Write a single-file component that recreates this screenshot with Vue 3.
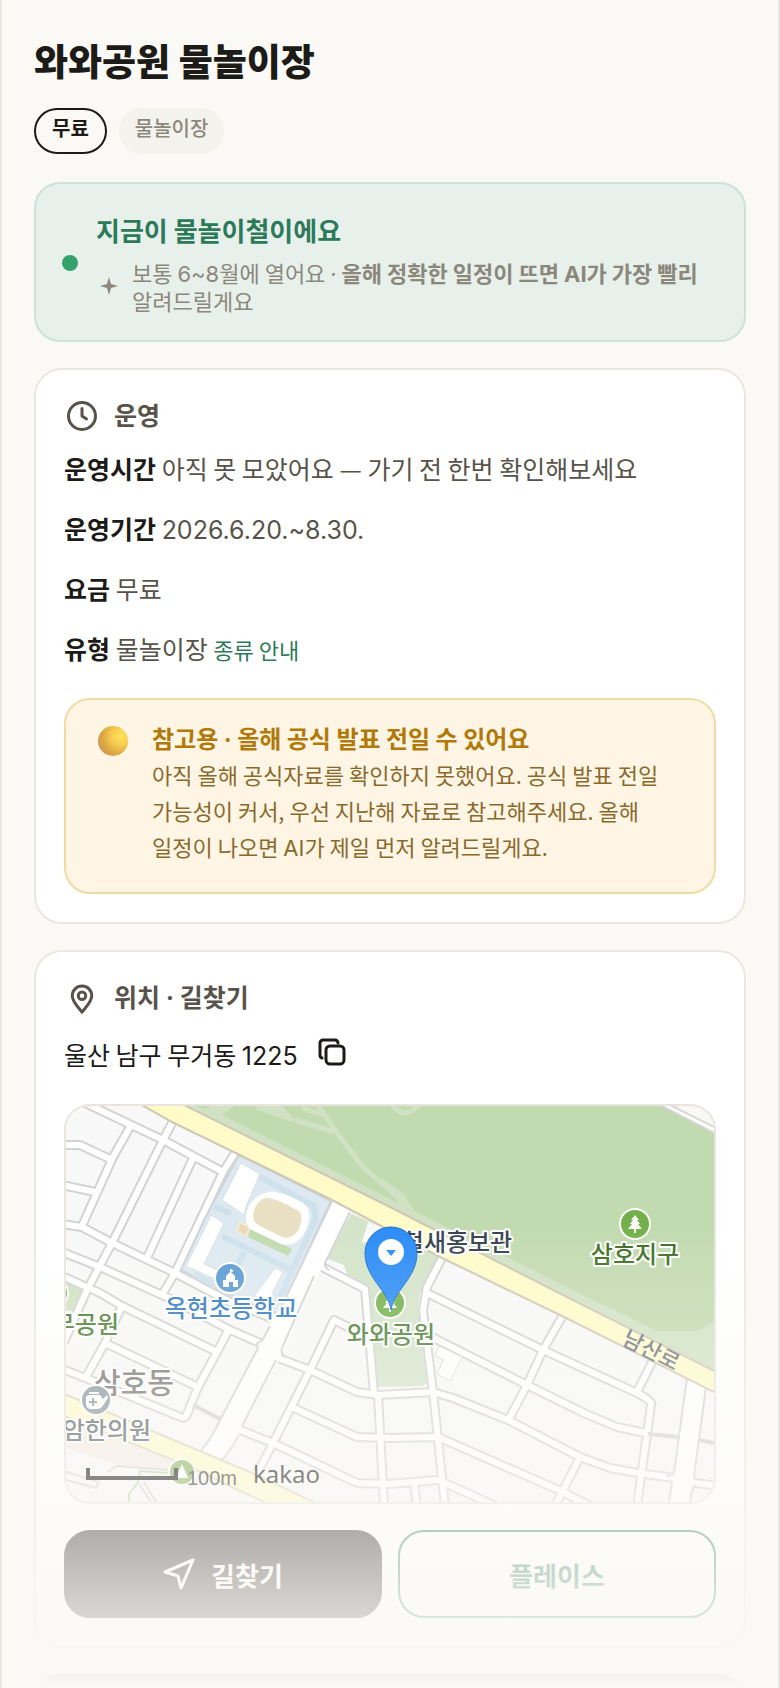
<script setup>
const facts = [
  { label: '운영시간', value: '아직 못 모았어요 — 가기 전 한번 확인해보세요' },
  { label: '운영기간', value: '2026.6.20.~8.30.', latin: true },
  { label: '요금', value: '무료' },
  { label: '유형', value: '물놀이장', link: '종류 안내' },
]

// centre lines of the small streets, in map units
const streets = [
  // north-west blocks
  'M19 -3L97 34L157 66',
  'M-4 39H14L44 53',
  'M64 21L47 51L16 120',
  'M-4 79L29 86',
  'M106 17L97 34L46 137L21 184L-2 236',
  'M127 52L81 152',
  'M169 47L157 66L109 167L97 187',
  'M-4 118L16 121L46 137L109 167L164 196L205 212',
  'M-4 146L34 161L107 194L164 224L194 237',
  'M-4 170L34 187L56 200L151 246',
  // south-west blocks
  'M56 200L39 237L20 271',
  'M39 237L132 281',
  'M162 225L151 246L132 281L121 308Q119 314 112 310L27 275L-4 263',
  // centre
  'M256 161L299 183L308 288',
  'M284 222L268 214L244 264L207 337L192 366',
  'M212 252L244 264L291 286L312 289L367 286L387 292L442 314L514 351L544 362L572 367L608 372',
  'M228 302L291 331L324 332L372 331L497 386L524 400',
  'M174 324L207 337L291 377L324 378L372 374L430 400',
  'M312 289L318 400',
  // south-east blocks
  'M377 150L361 181L357 204L367 286L379 400',
  'M361 187L477 244L571 287Q587 295 585 299L571 400',
  'M366 231L461 279L520 308L551 321L580 327',
  'M496 211L477 244L461 279L443 313',
  'M586 256L571 286',
  'M514 351L489 400',
  'M348 376L351 400',
  'M624 376L652 380',
]
</script>

<template>
  <main class="page">
    <header class="head">
      <h1 class="head__title">와와공원 물놀이장</h1>
      <div class="head__chips">
        <span class="chip chip--outline">무료</span>
        <span class="chip">물놀이장</span>
      </div>
    </header>

    <section class="season">
      <span class="season__dot"></span>
      <div class="season__body">
        <h2 class="season__title">지금이 물놀이철이에요</h2>
        <div class="season__note">
          <svg class="season__spark" viewBox="0 0 16 16" aria-hidden="true">
            <path d="M8 0L9.800 6.200L16 8L9.800 9.800L8 16L6.200 9.800L0 8L6.200 6.200Z" />
          </svg>
          <p>
            보통 <span class="latin">6~8</span>월에 열어요 <span class="latin">·</span> <b>올해 정확한 일정이 뜨면
            <span class="latin">AI</span>가 가장 빨리</b> 알려드릴게요
          </p>
        </div>
      </div>
    </section>

    <section class="card">
      <h2 class="card__title">
        <svg class="icon" viewBox="0 0 24 24" aria-hidden="true">
          <circle cx="12" cy="12" r="9" />
          <path d="M12 7v5l3 2" />
        </svg>
        운영
      </h2>
      <dl class="facts">
        <div v-for="fact in facts" :key="fact.label" class="facts__row">
          <dt>{{ fact.label }}</dt>
          {{ ' ' }}
          <dd>
            <span :class="{ latin: fact.latin }">{{ fact.value }}</span>
            {{ ' ' }}
            <a v-if="fact.link" href="#types">{{ fact.link }}</a>
          </dd>
        </div>
      </dl>
      <aside class="notice">
        <svg class="notice__ball" viewBox="0 0 30 30" aria-hidden="true">
          <defs>
            <radialGradient id="ball" cx="0.75" cy="0.35" r="0.8">
              <stop offset="0" stop-color="#ffe35a" />
              <stop offset="0.35" stop-color="#f8cd4f" />
              <stop offset="0.75" stop-color="#dba742" />
              <stop offset="1" stop-color="#cf9458" />
            </radialGradient>
          </defs>
          <circle cx="15" cy="15" r="15" fill="url(#ball)" />
        </svg>
        <div>
          <h3 class="notice__title">참고용 <span class="latin">·</span> 올해 공식 발표 전일 수 있어요</h3>
          <p class="notice__text">
            아직 올해 공식자료를 확인하지 못했어요. 공식 발표 전일 가능성이 커서, 우선 지난해 자료로 참고해주세요. 올해 일정이 나오면
            <span class="latin">AI</span>가 제일 먼저 알려드릴게요.
          </p>
        </div>
      </aside>
    </section>

    <section class="card">
      <h2 class="card__title">
        <svg class="icon" viewBox="0 0 24 24" aria-hidden="true">
          <path d="M12 21.500C9.500 18 5.500 14.500 5.500 10.500a6.500 6.500 0 0 1 13 0C18.500 14.500 14.500 18 12 21.500Z" />
          <circle cx="12" cy="10.500" r="2.500" />
        </svg>
        <span>위치 <span class="latin">·</span> 길찾기</span>
      </h2>
      <div class="address">
        <span>울산 남구 무거동 <span class="latin">1225</span></span>
        <button class="address__copy" type="button" aria-label="주소 복사">
          <svg viewBox="0 0 28 28" aria-hidden="true">
            <rect x="8" y="8" width="18" height="18" rx="4" />
            <path d="M4 20A3 3 0 0 1 2 17V5a3 3 0 0 1 3-3h12a3 3 0 0 1 3 3" />
          </svg>
        </button>
      </div>

      <div class="map">
        <svg
          class="map__art"
          viewBox="0 0 648 396"
          preserveAspectRatio="xMidYMid slice"
          role="img"
          aria-label="와와공원 주변 지도"
        >
          <rect width="648" height="396" fill="#f8f8f8" />

          <!-- riverside park -->
          <path d="M118 0H648V270L487 188L320 104Z" fill="#d0e2c3" />
          <path d="M156 9L168 0H648V219L631 225H591L527 194L324 93Z" fill="#c2dab0" />
          <path d="M128 0H146L140 3Z" fill="#c2dab0" />
          <g fill="none" stroke="#d0e2c3" stroke-width="5">
            <path d="M251 -2L271 27L297 61L324 84L344 104M229 14L268 26M236 2L256 8M314 74L336 90L346 106" />
            <path d="M326 -2Q339 16 353 -2" />
            <path d="M648 219L632 228L630 243L648 254" />
          </g>
          <path d="M190 0H216L229 14L226 16L191 4Z" fill="#d0e2c3" />
          <path d="M594 -2H652V29L594 -1Z" fill="#fff" stroke="#d5d3d3" stroke-width="2" />
          <path d="M604 -1H652V23Z" fill="#f8f8f8" stroke="#d4d8cf" stroke-width="2" />

          <!-- neighbourhood park -->
          <path
            d="M284 107L262 153L278 159L281 167L277 171L300 183L311 281L357 280L364 275L352 204L354 187L376 148Z"
            fill="#d3e4c9"
          />
          <path d="M0 172L20 184L10 206L0 204Z" fill="#d0e2c3" />
          <path d="M302 116L320 122L314 140L296 136Z" fill="#f8f8f8" />

          <!-- blocks and streets -->
          <g fill="none" stroke="#d3d3d3" stroke-width="10" stroke-linejoin="round">
            <path v-for="d in streets" :key="d" :d="d" />
          </g>
          <g fill="none" stroke="#fff" stroke-width="6" stroke-linejoin="round">
            <path v-for="d in streets" :key="d" :d="d" />
          </g>

          <!-- school grounds -->
          <path d="M173 49L265 95L212 208L166 190L115 164L140 110Z" fill="#dde9f1" stroke="#ced4d8" stroke-width="2" />
          <g fill="none" stroke="#cfe1ed" stroke-width="6">
            <path d="M192 70L248 100L250 112L212 196M148 100L165 108M156 130L225 164M178 146L165 172M128 168L160 184" />
          </g>
          <g fill="#fff" stroke="#d8dee2" stroke-width="1">
            <path d="M175 57L194 68L181 98L178 109L156 94Z" />
            <path d="M145 109L158 117L138 158L168 172L164 180L120 160L138 124Z" />
            <path d="M209 162L217 166L202 196L188 190Z" />
          </g>
          <path d="M184 123L226 143L222 150L182 131Z" fill="#c2dab0" />
          <path d="M174 116L184 121L180 130L171 125Z" fill="#ead9b8" stroke="#f4ebd8" stroke-width="2" />
          <path d="M203 86Q214 84 237 97Q249 106 239 126Q230 142 215 138L186 124Q175 116 184 98Q191 88 203 86Z" fill="#fff" />
          <path d="M200 92Q208 91 231 104Q238 108 234 120Q230 132 218 132L192 119Q184 114 189 102Q193 93 200 92Z" fill="#e9dfc2" />

          <!-- wide streets -->
          <path d="M266 94L286 106L259 157L244 184L214 252L174 324L156 356L134 346L154 314L194 240L219 191Z" fill="#fff" />
          <g fill="none" stroke="#d3d3d3" stroke-width="2">
            <path d="M266 95L214 204M204 220L196 235Q188 237 192 242L154 314Q146 332 134 346" />
            <path d="M284 106L259 157Q258 161 263 164M248 170L216 242Q214 248 220 251M210 254L176 320M172 330Q168 340 156 354" />
          </g>
          <path d="M127 299L154 313" stroke="#d0d0d0" stroke-width="4" />
          <path d="M621 270L641 280L624 396H604Z" fill="#fff" />
          <path
            d="M621 272L608 367Q606 370 600 370M606 376L603 396M640 281L628 370Q628 373 634 374M630 380Q626 380 624 396"
            fill="none"
            stroke="#d3d3d3"
            stroke-width="2"
          />
          <path d="M582 328L612 331M633 334L648 337" stroke="#d0d0d0" stroke-width="4" />
          <path d="M373 240L396 251L384 275L371 268L377 254L369 250Z" fill="#fff" stroke="#d8d8d8" stroke-width="1" />

          <!-- main roads -->
          <path
            d="M74 -2L106 16L266 94L374 151L442 184L494 209L652 288V267L487 184L324 101L116 -2Z"
            fill="#fffbc9"
            stroke="#cfc7b4"
            stroke-width="2"
          />
          <path d="M-4 287L136 346L184 366L252 398H202L124 361L-4 309Z" fill="#fffbc9" stroke="#d9d4bd" stroke-width="2" />
          <path d="M0 312L124 362L112 368L50 358L0 342Z" fill="#f4ede3" />
          <path d="M63 398V388L72 376L74 365L114 368" fill="none" stroke="#b5d69c" stroke-width="2" />
          <path
            d="M42 366L50 360L104 364M73 378L86 398M78 376L90 396M0 366L33 376L30 382L0 374"
            fill="none"
            stroke="#d3d3d3"
            stroke-width="2"
          />

          <!-- map labels -->
          <g class="map__labels">
            <text x="165" y="211" fill="#2f78c0" text-anchor="middle">옥현초등학교</text>
            <text x="391" y="145" fill="#36414f" text-anchor="middle">철새홍보관</text>
            <text x="569" y="157" fill="#3d6f22" text-anchor="middle">삼호지구</text>
            <text x="325" y="237" fill="#467a30" text-anchor="middle">와와공원</text>
            <text x="53" y="227" fill="#467a30" text-anchor="end">무공원</text>
            <text class="map__district" x="108" y="288" fill="#707070" text-anchor="end">삼호동</text>
            <text x="85" y="333" fill="#4f5a61" text-anchor="end">암한의원</text>
            <text class="map__road" x="585" y="252" transform="rotate(27 585 245)" fill="#6a7184" text-anchor="middle">남산로</text>
          </g>

          <!-- place badges -->
          <g stroke="#fff" stroke-width="2">
            <circle cx="164" cy="172" r="15" fill="#5b9bd3" />
            <circle cx="569" cy="118" r="15" fill="#73b04a" />
            <circle cx="324" cy="197" r="15" fill="#73b04a" />
            <circle cx="30" cy="294" r="15" fill="#84939b" />
            <circle cx="116" cy="366" r="13" fill="#84ad54" />
            <circle cx="-12" cy="187" r="14" fill="#73b04a" />
          </g>
          <g fill="#fff">
            <path d="M157 181V174H160V170L164 166V163H165L168 165L165 166L169 170V174H172V181H167V176H163V181Z" />
            <path d="M569 109L573 114H571L574 118H572L576 123H570V127H568V123H562L566 118H564L567 114H565Z" />
            <path d="M324 188L328 193H326L329 197H327L331 202H325V206H323V202H317L321 197H319L322 193H320Z" />
            <path d="M116 358L122 372L110 372Z" />
            <path d="M20 292Q20 289 24 289H34L37 293L41 289L42 292L36 301Q34 303 31 303H25Q20 303 20 297ZM23 286H33V288H23Z" />
          </g>
          <path d="M27 292V300M23 296H31" stroke="#84939b" stroke-width="2" />

          <!-- pin -->
          <path
            d="M325 204C322 184 299 172 299 147A26 26 0 0 1 351 147C351 172 328 184 325 204Z"
            fill="#2b8cf7"
            stroke="#1b6ed0"
            stroke-width="1"
          />
          <circle cx="325" cy="146" r="13" fill="#fff" />
          <path d="M320 144H330L325 150Z" fill="#2b8cf7" />

          <!-- scale and provider -->
          <path d="M22 362V372H110V362" fill="none" stroke="#000" stroke-width="4" />
          <text class="map__scale" x="121" y="379">100m</text>
          <text class="map__brand" x="187" y="377">kakao</text>
        </svg>
      </div>

      <div class="actions">
        <button class="btn btn--dark" type="button">
          <svg class="btn__icon" viewBox="0 0 32 32" aria-hidden="true">
            <path d="M30 2L2 14L15 18L18 30Z" />
          </svg>
          길찾기
        </button>
        <button class="btn btn--line" type="button">플레이스</button>
      </div>
    </section>

    <section class="card card--next"></section>
    <div class="fade"></div>
  </main>
</template>

<style>
body {
  margin: 0;
  background: #faf9f5;
}
</style>

<style scoped>
.page {
  position: relative;
  box-sizing: border-box;
  height: 100vh;
  overflow: hidden;
  padding: 34px 32px 0;
  border: solid #e9e7e0;
  border-width: 0 2px;
  background: #faf9f5;
  color: #1c1b18;
  font-family: 'Noto Sans CJK KR', sans-serif;
  font-size: 25px;
  word-break: keep-all;
}

h1,
h2,
h3,
p,
dl,
dd {
  margin: 0;
}

.latin {
  font-family: Inter, 'Noto Sans CJK KR', sans-serif;
  line-height: 1;
}

.head__title {
  font-size: 37px;
  font-weight: 800;
  line-height: 52px;
}

.head__chips {
  display: flex;
  gap: 12px;
  margin-top: 22px;
}

.chip {
  box-sizing: border-box;
  height: 46px;
  padding: 0 16px;
  border-radius: 23px;
  background: #f3f2ed;
  color: #8c877b;
  font-size: 20px;
  font-weight: 500;
  line-height: 40px;
}

.chip--outline {
  border: 2px solid #1c1b18;
  background: none;
  color: #1c1b18;
  font-weight: 700;
  line-height: 36px;
}

.season {
  display: flex;
  align-items: center;
  gap: 18px;
  margin-top: 28px;
  padding: 28px 26px 26px;
  border: 2px solid #cde3d8;
  border-radius: 26px;
  background: #e7f0eb;
}

.season__dot {
  flex: none;
  width: 16px;
  height: 16px;
  border-radius: 50%;
  background: #35a26d;
}

.season__title {
  color: #2c7a5a;
  font-size: 26px;
  font-weight: 700;
  line-height: 36px;
}

.season__note {
  display: flex;
  align-items: center;
  gap: 14px;
  margin-top: 10px;
  padding-left: 4px;
  color: #8c877b;
  font-size: 22px;
  line-height: 28px;
}

.season__spark {
  flex: none;
  width: 18px;
  height: 18px;
  fill: #8c877b;
}

.card {
  margin-top: 26px;
  padding: 28px;
  border: 2px solid #e9e7e0;
  border-radius: 28px;
  background: #fff;
}

.card__title {
  display: flex;
  align-items: flex-start;
  gap: 14px;
  color: #57534a;
  font-size: 25px;
  font-weight: 700;
  line-height: 32px;
}

.icon {
  width: 36px;
  height: 36px;
  fill: none;
  stroke: #57534a;
  stroke-width: 2;
  stroke-linecap: round;
  stroke-linejoin: round;
}

.facts {
  display: grid;
  gap: 20px;
  margin-top: 14px;
  color: #57534a;
}

.facts__row {
  line-height: 40px;
}

.facts__row dt,
.facts__row dd {
  display: inline;
}

.facts__row dt {
  color: #1c1b18;
  font-weight: 700;
}

.facts__row a {
  color: #2c7a5a;
  font-size: 22px;
  line-height: 1;
  text-decoration: none;
}

.notice {
  display: flex;
  align-items: flex-start;
  gap: 24px;
  margin-top: 30px;
  padding: 20px 32px 28px;
  border: 2px solid #efdba5;
  border-radius: 26px;
  background: #fff5e4;
}

.notice__ball {
  flex: none;
  width: 30px;
  height: 30px;
  margin-top: 6px;
}

.notice__title {
  color: #b27908;
  font-size: 24px;
  font-weight: 700;
  line-height: 36px;
}

.notice__text {
  color: #8a6a2c;
  font-size: 22px;
  line-height: 36px;
}

.address {
  display: flex;
  align-items: flex-start;
  gap: 20px;
  margin-top: 16px;
  line-height: 44px;
}

.address__copy {
  width: 32px;
  height: 40px;
  padding: 0;
  border: 0;
  background: none;
}

.address__copy svg {
  display: block;
  width: 28px;
  height: 28px;
  fill: none;
  stroke: #1c1b18;
  stroke-width: 3;
  stroke-linecap: round;
}

.map {
  overflow: hidden;
  margin-top: 28px;
  border: 2px solid #e9e5de;
  border-radius: 26px;
}

.map__art {
  display: block;
  width: 100%;
}

.map__labels {
  font-size: 24px;
  font-weight: 500;
  stroke: #fff;
  stroke-width: 4px;
  stroke-linejoin: round;
  paint-order: stroke;
}

.map__district {
  font-size: 29px;
}

.map__road {
  font-size: 22px;
  stroke: none;
}

.map__scale {
  fill: #222;
  font-family: 'Liberation Sans', sans-serif;
  font-size: 20px;
}

.map__brand {
  fill: #000;
  font-family: 'Noto Sans', sans-serif;
  font-size: 24px;
}

.actions {
  display: grid;
  grid-template-columns: 1fr 1fr;
  gap: 16px;
  margin-top: 26px;
}

.btn {
  display: flex;
  align-items: center;
  justify-content: center;
  gap: 16px;
  box-sizing: border-box;
  height: 88px;
  padding: 0;
  border: 2px solid #1c1b18;
  border-radius: 26px;
  font: 700 26px 'Noto Sans CJK KR', sans-serif;
}

.btn--dark {
  background: #1c1b18;
  color: #fff;
}

.btn--line {
  border-color: #2c7a5a;
  background: #fff;
  color: #2c7a5a;
}

.btn__icon {
  width: 32px;
  height: 32px;
  fill: none;
  stroke: currentColor;
  stroke-width: 3;
  stroke-linejoin: round;
}

.card--next {
  height: 120px;
  border-color: #1c1b18;
  background: #1c1b18;
}

.fade {
  position: absolute;
  right: 0;
  bottom: 0;
  left: 0;
  height: 464px;
  background: linear-gradient(rgba(250, 249, 245, 0), #faf9f5);
  pointer-events: none;
}
</style>
